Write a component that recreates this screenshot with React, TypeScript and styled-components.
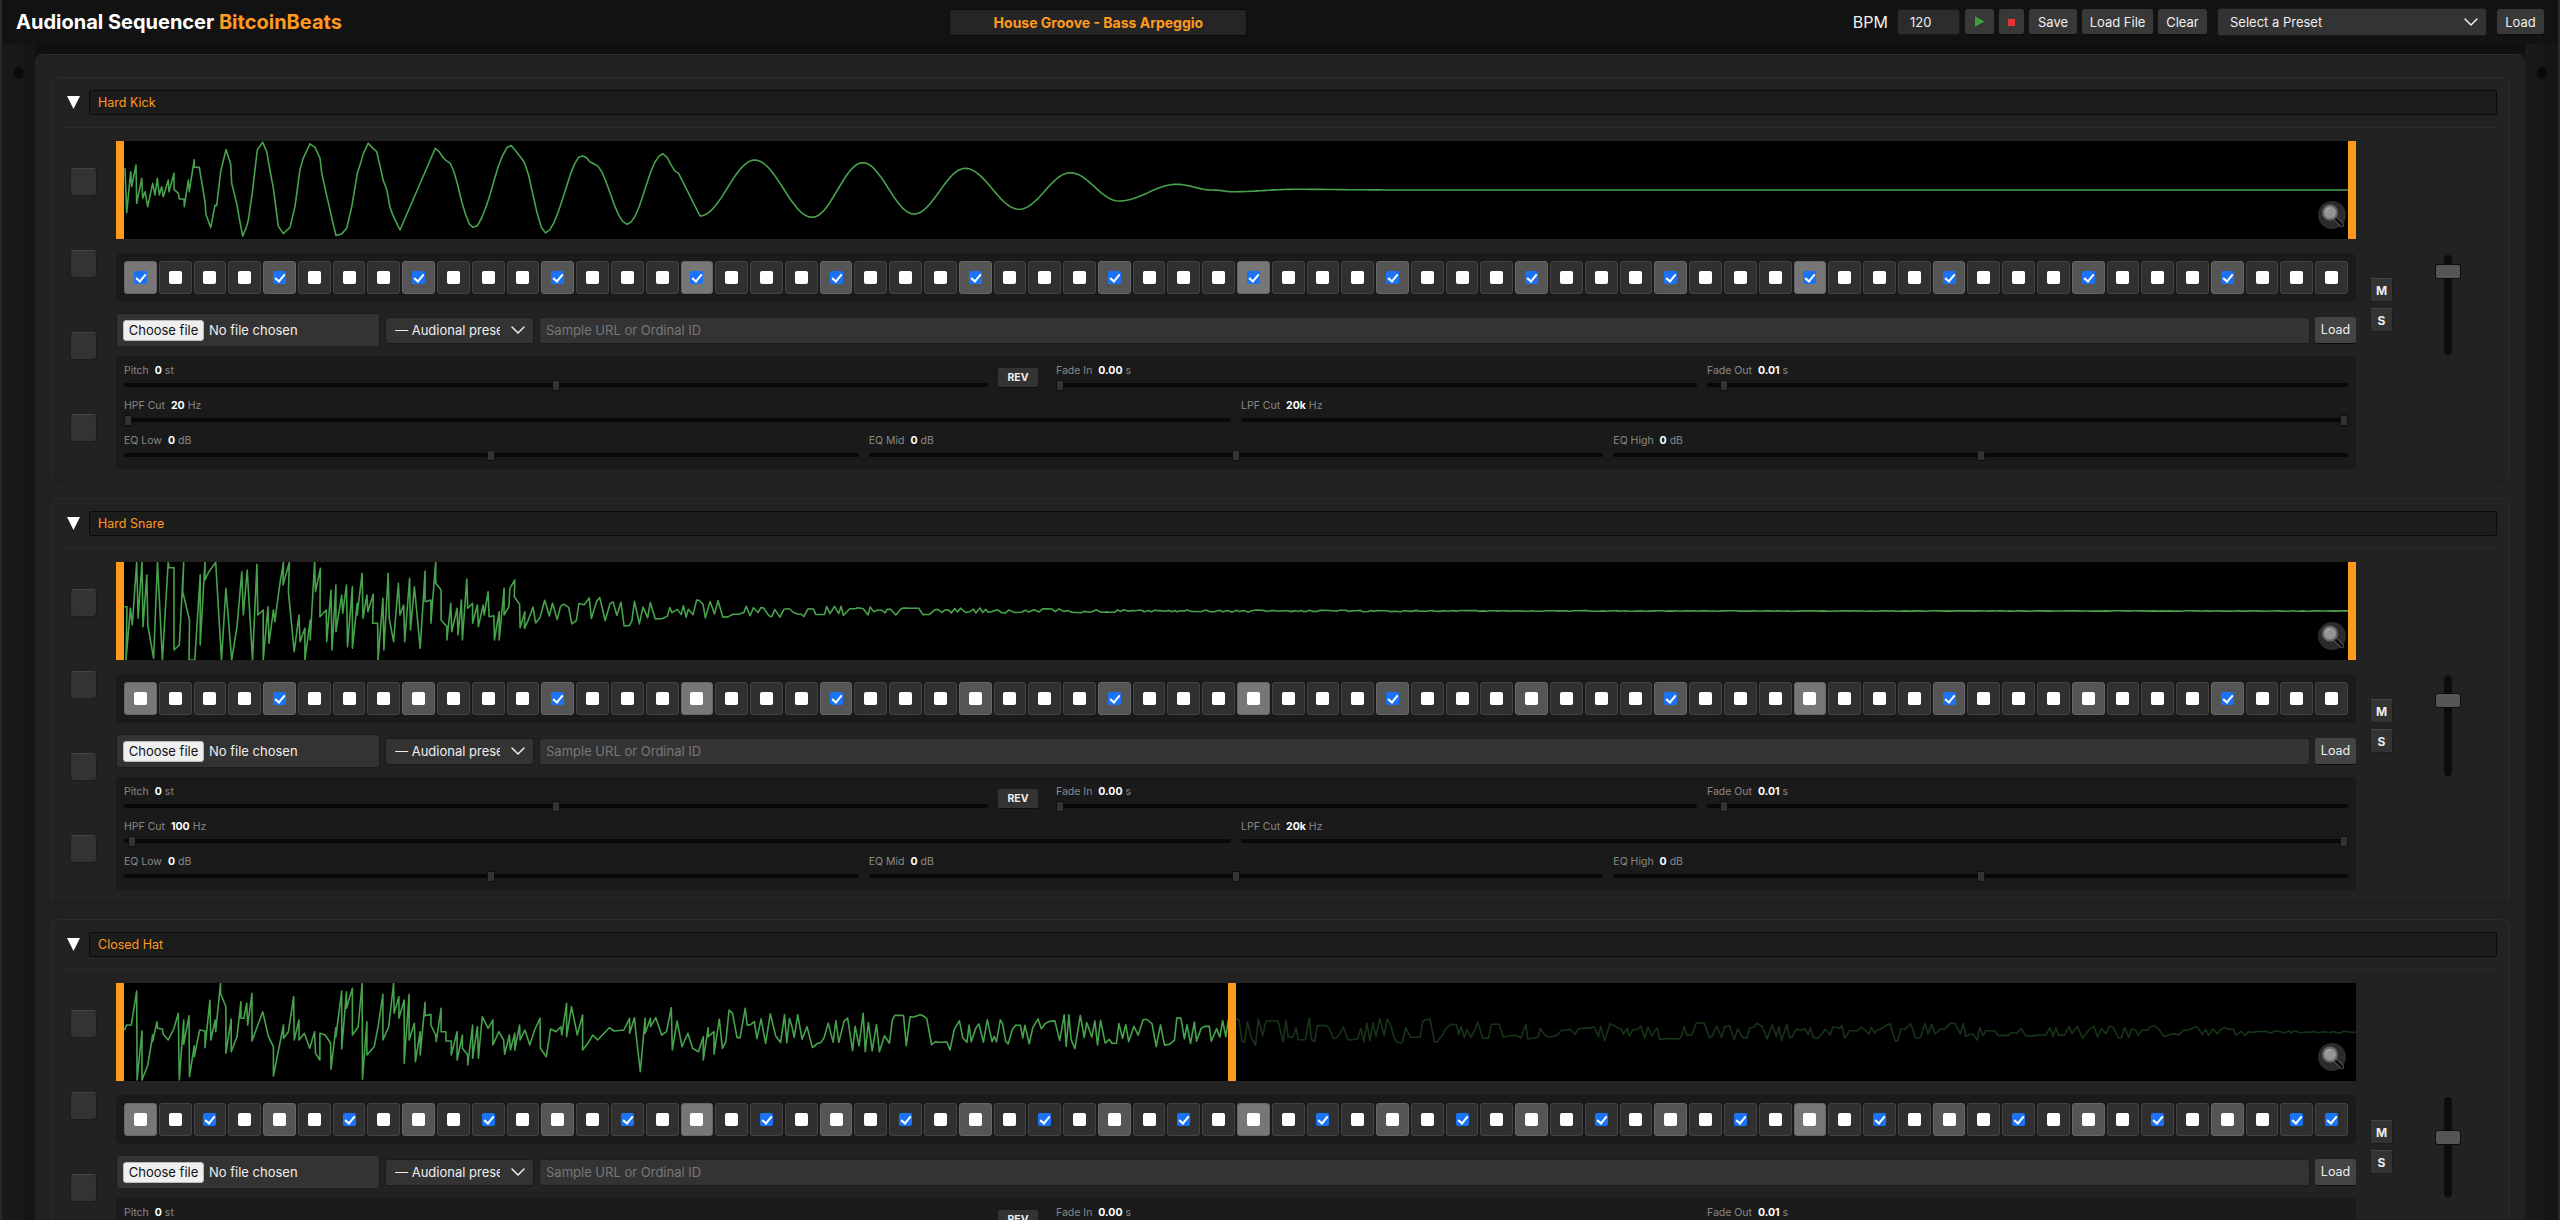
import styled, { createGlobalStyle } from "styled-components";
import { ChevronDown } from "lucide-react";

type Pt = [number, number];

const GlobalStyle = createGlobalStyle`
	html, body {
		margin: 0;
		height: 100%;
		overflow: hidden;
		background: #111;
		font-family: Inter, "Liberation Sans", sans-serif;
		color: #eee;
	}
	* {
		box-sizing: border-box;
	}
`;

/* waveform data, in px inside the 2240x98 display */
const CENTER = 49;
const WIDTH = 2240;

const noise = (seed: number) => {
	let s = seed;
	return () => {
		s = (s * 16807) % 2147483647;
		return s / 2147483647;
	};
};

const toPath = (pts: Pt[]) =>
	pts.map(([x, y], i) => `${i ? "L" : "M"}${x.toFixed(1)} ${y.toFixed(1)}`).join("");

// cosine easing between extremes, for the low sine of the kick
const smooth = (pts: Pt[], step: number, jitter = 0) => {
	const rnd = noise(1234);
	const out: Pt[] = [];
	for (let i = 0; i < pts.length - 1; i++) {
		const [x0, y0] = pts[i];
		const [x1, y1] = pts[i + 1];
		const n = Math.max(1, Math.round((x1 - x0) / step));
		for (let k = 0; k < n; k++) {
			const t = k / n;
			const y = y0 + ((y1 - y0) * (1 - Math.cos(Math.PI * t))) / 2;
			out.push([x0 + (x1 - x0) * t, y + (rnd() - 0.5) * jitter]);
		}
	}
	out.push(pts[pts.length - 1]);
	return out;
};

// the noisy part of a decay: spikes, small plateaus and louder and quieter bursts
const tail = (from: number, seed: number, amp: (x: number) => number) => {
	const rnd = noise(seed);
	const out: Pt[] = [];
	let up = false;
	let gain = 1;
	let last = 0;
	let count = 0;
	let held = 0;
	for (let x = from; x < WIDTH; x += 2 + rnd() * 3.5) {
		if (count++ % 9 === 0) gain = 0.6 + rnd() * 0.6;
		if (rnd() < 0.75) up = !up;
		if (rnd() > 0.14 || held > 1) {
			last = (up ? 1 : -1) * (0.2 + rnd() * 0.8);
			held = 0;
		} else {
			held++;
		}
		out.push([x, CENTER + amp(x) * gain * last]);
	}
	out.push([WIDTH, CENTER]);
	return out;
};

const kickHead: Pt[] = ([
	[75, 115], [80, 248], [92, 125], [95, 170], [108, 105], [110, 220], [125, 145], [128, 205], [135, 185],
	[143, 230], [158, 160], [165, 195], [172, 145], [178, 195], [185, 170], [190, 200], [205, 150], [207, 185],
	[222, 130], [222, 178], [235, 190], [238, 207], [252, 207], [253, 230], [265, 150], [268, 185], [283, 90],
	[283, 112], [298, 110], [315, 215], [318, 255], [332, 295], [345, 225], [350, 228], [362, 125], [378, 60],
	[392, 100], [395, 160], [410, 220], [428, 318], [440, 290], [445, 270], [457, 190], [472, 60], [488, 38],
	[500, 65], [520, 175], [535, 290], [550, 312], [570, 290], [585, 230], [600, 120], [610, 85], [630, 40],
	[645, 52], [660, 85], [665, 130], [690, 240], [708, 315], [725, 310], [740, 295], [755, 230], [772, 130],
	[790, 70], [805, 40], [830, 65], [850, 150], [880, 260], [900, 300],
] as Pt[]).map(([x, y]) => [x / 3 - 16, y / 3 - 11] as Pt);

const kickMid: Pt[] = ([
	[975, 447], [1000, 480], [1060, 683], [1145, 437], [1165, 470], [1222, 697], [1305, 467], [1330, 490],
	[1405, 672], [1485, 462], [1520, 520],
] as Pt[]).map(([x, y]) => [x / 2.24 - 116, y / 3 - 141] as Pt);

const kickEnd: Pt[] = ([
	[0, 648], [78, 480], [160, 652], [232, 488], [305, 642], [378, 505], [455, 628], [528, 518], [597, 603],
	[680, 553], [730, 570], [760, 575], [850, 568], [1000, 570],
] as Pt[]).map(([x, y]) => [584 + x / 1.4255, y / 3 - 141] as Pt);

const kickPath = toPath([
	...kickHead.slice(0, 26),
	...smooth(kickHead.slice(25), 4, 1.6),
	...smooth(kickMid, 4, 1.4),
	...smooth(kickEnd, 3),
	[WIDTH, CENTER],
]);

const snareHead: Pt[] = ([
	[30, 155], [35, 155], [33, 315], [42, 160], [46, 210], [55, 20], [58, 190], [66, 20], [68, 215], [76, 60], [78, 210],
	[90, 310], [98, 22], [108, 315], [120, 22], [122, 38], [132, 38], [132, 285], [143, 270], [152, 22], [150, 110],
	[164, 195], [163, 315], [175, 315], [186, 60], [186, 270], [196, 20], [196, 75], [204, 50], [218, 22], [230, 315],
	[239, 100], [251, 315], [262, 215], [272, 50], [275, 180], [283, 45], [294, 315], [303, 28], [305, 180], [316, 165],
	[316, 315], [326, 155], [328, 265], [337, 165], [340, 200], [350, 90], [358, 22], [357, 90], [370, 22], [368, 110],
	[380, 290], [390, 180], [392, 260], [402, 220], [402, 315], [413, 195], [413, 255], [422, 22], [424, 110], [434, 40],
	[433, 185], [446, 165], [447, 260], [456, 105], [458, 285], [466, 90], [466, 230], [478, 120], [480, 175], [488, 90],
	[490, 275], [500, 95], [500, 280], [510, 145], [510, 180], [520, 55], [522, 190], [530, 120], [532, 170], [543, 118],
	[542, 205], [552, 205], [553, 315], [563, 130], [565, 285], [574, 55], [576, 190], [585, 260], [595, 85], [598, 180],
	[606, 150], [608, 260], [618, 70], [620, 225], [628, 95], [640, 280], [650, 48], [650, 140], [662, 135], [662, 205],
	[672, 20], [672, 85], [683, 105], [683, 195], [695, 215], [695, 255], [703, 145], [705, 230], [716, 160], [718, 240],
	[725, 135], [727, 255], [736, 72], [738, 160], [748, 145], [748, 205], [758, 150], [760, 215], [770, 150], [772, 180],
	[780, 110], [782, 185], [792, 182], [793, 255], [803, 170], [803, 255], [813, 100], [813, 180], [823, 155], [825, 100],
	[835, 75], [834, 125], [845, 148], [846, 218], [856, 170], [855, 220],
] as Pt[]).map(([x, y]) => [x / 2.063 - 6, y / 3 - 7] as Pt);

const snarePath = toPath([
	...snareHead,
	...tail(412, 4711, (x) => 20 * Math.exp(-(x - 412) / 230) + 0.2),
]);

const hatHead: Pt[] = ([
	[30, 165], [34, 150], [44, 150], [55, 48], [56, 315], [66, 168], [66, 315], [78, 270], [88, 180], [88, 200], [97, 140],
	[98, 160], [108, 162], [110, 178], [120, 195], [132, 160], [141, 115], [143, 315], [152, 135], [152, 208], [163, 122],
	[164, 305], [174, 212], [174, 245], [185, 165], [196, 168], [196, 218], [206, 76], [208, 195], [217, 135], [218, 170],
	[228, 25], [228, 55], [239, 95], [239, 235], [250, 132], [250, 230], [262, 185], [270, 80], [270, 130], [276, 130],
	[282, 85], [284, 150], [293, 55], [293, 198], [315, 110], [327, 185], [337, 215], [337, 303], [358, 150], [358, 190],
	[368, 170], [379, 65], [380, 195], [390, 135], [390, 195], [401, 175], [412, 220], [422, 170], [424, 235], [433, 255],
	[433, 175], [444, 180], [455, 205], [456, 283], [466, 158], [466, 185], [478, 48], [478, 222], [488, 50], [488, 100],
	[500, 40], [500, 180], [512, 155], [520, 25], [521, 313], [530, 140], [530, 240], [545, 215], [553, 155], [563, 58],
	[563, 195], [575, 155], [585, 25], [586, 115], [596, 65], [596, 130], [607, 75], [607, 265], [617, 58], [617, 195],
	[628, 145], [630, 260], [640, 170], [640, 240], [650, 82], [650, 122], [662, 118], [662, 150], [672, 180], [673, 200],
	[683, 100], [683, 170], [693, 170], [693, 198], [704, 198], [704, 240], [716, 170], [716, 255], [727, 180], [727, 220],
	[738, 240], [738, 270], [748, 150], [748, 250], [758, 155], [760, 250], [768, 125], [780, 160], [790, 135], [790, 210],
	[802, 170], [812, 195], [814, 238], [824, 180], [826, 225], [835, 175], [835, 225], [845, 150], [846, 195], [856, 165],
	[866, 210], [876, 165], [887, 130], [888, 220], [900, 245], [909, 162], [920, 170], [930, 155], [932, 180], [942, 85],
	[942, 185], [952, 95], [964, 180], [975, 120], [975, 225], [986, 205], [996, 180], [1006, 195], [1030, 158], [1040, 168],
	[1060, 165], [1072, 130], [1072, 175], [1082, 128], [1084, 160], [1094, 290], [1104, 130], [1104, 175], [1115, 130],
	[1115, 155], [1126, 128], [1138, 180], [1148, 170], [1158, 98], [1160, 225], [1170, 138], [1180, 215], [1192, 175],
	[1202, 220], [1214, 230], [1224, 185], [1224, 255], [1234, 158], [1234, 185], [1246, 170],
] as Pt[]).map(([x, y]) => [x / 2.063 - 6, y / 3 - 8] as Pt);

const hatPath = toPath([
	...hatHead,
	...tail(598, 90210, (x) => (x > 2130 ? 1.2 : 24 * Math.exp(-(x - 598) / 950) + 1)),
]);

const STEPS = Array.from({ length: 64 }, (_, i) => i);

const TRACKS = [
	{ name: "Hard Kick", path: kickPath, hpf: 20, fader: 90, trimEnd: WIDTH, on: (i: number) => i % 4 === 0 },
	{ name: "Hard Snare", path: snarePath, hpf: 100, fader: 80, trimEnd: WIDTH, on: (i: number) => i % 8 === 4 },
	{ name: "Closed Hat", path: hatPath, hpf: 20, fader: 61, trimEnd: 1120, on: (i: number) => i % 4 === 2 || i === 63 },
];

const Page = styled.div`
	width: 2560px;
	min-height: 100vh;
	border-left: 2px solid #2a2a2a;
	border-right: 2px solid #2a2a2a;
	background: #111;
`;

const TopBar = styled.header`
	height: 44px;
	display: flex;
	align-items: center;
	justify-content: space-between;
	padding: 0 14px 0 14px;
	background: #121212;
`;

const Title = styled.h1`
	margin: 0;
	font-size: 20px;
	font-weight: 700;
	color: #fff;
	white-space: nowrap;
	span {
		color: #ff9a1f;
	}
`;

const SongName = styled.div`
	width: 298px;
	height: 27px;
	margin-left: 2px;
	display: flex;
	align-items: center;
	justify-content: center;
	background: #252525;
	border: 1px solid #0a0a0a;
	border-radius: 3px;
	color: #ff9a1f;
	font-size: 14px;
	font-weight: 700;
`;

const Transport = styled.div`
	display: flex;
	align-items: center;
	gap: 5px;
`;

const BpmLabel = styled.label`
	font-size: 16px;
	margin-right: 4px;
	color: #eee;
`;

const BpmInput = styled.input`
	width: 63px;
	height: 26px;
	padding: 0 12px;
	background: #2c2c2c;
	border: 1px solid #1c1c1c;
	border-radius: 3px;
	color: #eee;
	font: 13px Inter, sans-serif;
`;

const Button = styled.button<{ $w?: number }>`
	width: ${(p) => (p.$w ? `${p.$w}px` : "auto")};
	height: 26px;
	padding: 0;
	display: flex;
	align-items: center;
	justify-content: center;
	background: #383838;
	border: none;
	border-bottom: 1px solid #0c0c0c;
	border-radius: 3px;
	color: #eee;
	font: 13px Inter, sans-serif;
`;

const PlayIcon = styled.i`
	width: 10px;
	height: 11px;
	background: #3da13d;
	clip-path: polygon(0 0, 100% 50%, 0 100%);
`;

const StopIcon = styled.i`
	width: 7px;
	height: 7px;
	margin-top: 2px;
	background: #e63333;
`;

const SelectWrap = styled.div<{ $w: number; $h: number; $gap?: number }>`
	position: relative;
	flex: none;
	width: ${(p) => p.$w}px;
	height: ${(p) => p.$h}px;
	margin: 0 ${(p) => p.$gap ?? 0}px;
	svg {
		position: absolute;
		top: 50%;
		right: 4px;
		transform: translateY(-50%);
		pointer-events: none;
	}
`;

const Select = styled.select<{ $pad: number; $padR: number }>`
	width: 100%;
	height: 100%;
	padding: 0 ${(p) => p.$padR}px 0 ${(p) => p.$pad}px;
	appearance: none;
	background: #333;
	border: 1px solid #1a1a1a;
	border-radius: 3px;
	color: #eee;
	font: 13px Inter, sans-serif;
`;

const Body = styled.div`
	display: flex;
`;

const Rail = styled.div`
	flex: 0 0 33px;
	display: flex;
	justify-content: center;
	padding-top: 23px;
	background: linear-gradient(90deg, #1a1a1a, #141414);
`;

const Screw = styled.span`
	width: 10px;
	height: 12px;
	border-radius: 50%;
	background: #0a0a0a;
`;

const RackWrap = styled.div`
	flex: 0 0 2490px;
	padding-top: 10px;
	background: #101010;
`;

const Rack = styled.main`
	display: flex;
	flex-direction: column;
	gap: 16px;
	padding: 22px 15px 23px 16px;
	background: #212121;
	border-top: 1px solid #2d2d2d;
	border-radius: 8px 8px 0 0;
`;

const Card = styled.section`
	height: 405px;
	padding: 12px 11px;
	background: #222;
	border: 1px solid #2c2c2c;
	border-bottom-color: #1a1a1a;
	border-radius: 8px;
`;

const CardHeader = styled.div`
	display: flex;
	align-items: center;
	margin-right: 1px;
	padding-bottom: 12px;
	border-bottom: 1px solid #2c2c2c;
	margin-bottom: 13px;
`;

const Collapse = styled.button`
	flex: 0 0 26px;
	height: 25px;
	padding: 0 0 0 4px;
	background: none;
	border: none;
	&::before {
		content: "";
		display: block;
		width: 13px;
		height: 13px;
		background: #fff;
		clip-path: polygon(0 0, 100% 0, 50% 100%);
	}
`;

const NameInput = styled.input`
	flex: 1;
	height: 25px;
	padding: 0 8px;
	background: #1c1c1c;
	border: 1px solid #0a0a0a;
	border-radius: 2px;
	color: #ff9a1f;
	font: 12.5px Inter, sans-serif;
`;

const CardBody = styled.div`
	display: flex;
`;

const PadColumn = styled.div`
	flex: 0 0 40px;
	margin-right: 13px;
	display: flex;
	flex-direction: column;
	align-items: center;
	justify-content: space-around;
`;

const Pad = styled.button`
	width: 27px;
	height: 28px;
	padding: 0;
	background: #333;
	border: 1px solid #1c1c1c;
	border-top-color: #444;
	border-radius: 4px;
`;

const Main = styled.div`
	flex: 0 0 2240px;
`;

const Wave = styled.div`
	position: relative;
	height: 98px;
	background: #000;
	overflow: hidden;
	svg.wave {
		display: block;
	}
`;

const Handle = styled.span`
	position: absolute;
	top: 0;
	bottom: 0;
	width: 8px;
	background: #ff9a1f;
`;

const Dim = styled.span`
	position: absolute;
	top: 0;
	bottom: 0;
	right: 0;
	background: rgba(0, 0, 0, 0.68);
`;

const ZoomButton = styled.button`
	position: absolute;
	right: 10px;
	bottom: 10px;
	width: 28px;
	height: 28px;
	padding: 0;
	background: none;
	border: none;
`;

const StepStrip = styled.div`
	margin-top: 14px;
	height: 49px;
	padding: 8px;
	display: grid;
	grid-template-columns: repeat(64, 1fr);
	gap: 2px;
	background: #1a1a1a;
	border-radius: 6px;
`;

const Step = styled.label<{ $tone: string }>`
	display: flex;
	align-items: center;
	justify-content: center;
	background: ${(p) => p.$tone};
	border: 1px solid ${(p) => (p.$tone === "#303030" ? "#444" : "#666")};
	border-radius: 3px;
`;

const StepCheck = styled.input`
	appearance: none;
	position: relative;
	width: 13px;
	height: 13px;
	margin: 0;
	background: #fff;
	border-radius: 2px;
	&:checked {
		background: #1a73f5;
	}
	&:checked::after {
		content: "";
		position: absolute;
		left: 4px;
		top: 1px;
		width: 4px;
		height: 8px;
		border: solid #fff;
		border-width: 0 2px 2px 0;
		transform: rotate(40deg);
	}
`;

const SourceRow = styled.div`
	margin-top: 11px;
	height: 34px;
	display: flex;
	align-items: center;
	gap: 5px;
`;

const FilePicker = styled.label`
	flex: 0 0 264px;
	height: 34px;
	padding: 0 6px;
	display: flex;
	align-items: center;
	gap: 5px;
	background: #333;
	border: 1px solid #1c1c1c;
	border-radius: 3px;
	color: #eee;
	font-size: 13px;
	input {
		display: none;
	}
`;

const FileButton = styled.span`
	width: 81px;
	height: 21px;
	display: flex;
	align-items: center;
	justify-content: center;
	background: #efefef;
	border: 1px solid #bbb;
	border-radius: 3px;
	color: #111;
`;

const UrlInput = styled.input`
	flex: 1;
	height: 27px;
	padding: 0 6px;
	background: #333;
	border: 1px solid #1c1c1c;
	border-radius: 3px;
	color: #eee;
	font: 13px Inter, sans-serif;
	&::placeholder {
		color: #777;
	}
`;

const SmallLoad = styled(Button)`
	flex: 0 0 41px;
	height: 27px;
	background: #444;
	font-size: 12.5px;
`;

const FxPanel = styled.div`
	margin-top: 9px;
	height: 113px;
	padding: 8px 8px 8px;
	display: flex;
	flex-direction: column;
	gap: 8px;
	background: #1a1a1a;
	border-radius: 4px;
`;

const FxRow = styled.div<{ $cols: string }>`
	display: grid;
	grid-template-columns: ${(p) => p.$cols};
	column-gap: 10px;
	align-items: center;
`;

const Control = styled.div`
	min-width: 0;
`;

const ControlLabel = styled.label`
	display: block;
	height: 14px;
	margin-bottom: 1px;
	font-size: 10.5px;
	line-height: 14px;
	color: #888;
	b {
		margin-left: 3px;
		margin-right: 3px;
		color: #fff;
		font-weight: 700;
	}
`;

const Range = styled.input`
	display: block;
	width: 100%;
	height: 12px;
	margin: 0;
	appearance: none;
	background: transparent;
	&::-webkit-slider-runnable-track {
		height: 4px;
		background: #080808;
		border-radius: 2px;
	}
	&::-webkit-slider-thumb {
		appearance: none;
		width: 8px;
		height: 11px;
		margin-top: -3.5px;
		background: #333;
		border: 1px solid #0e0e0e;
		border-radius: 1px;
	}
`;

const RevButton = styled.button`
	width: 40px;
	height: 20px;
	padding: 0;
	background: #333;
	border: none;
	border-bottom: 1px solid #0e0e0e;
	border-radius: 2px;
	color: #eee;
	font: 700 10.5px Inter, sans-serif;
`;

const Side = styled.div`
	flex: 1;
	display: flex;
	align-items: center;
	padding-left: 14px;
`;

const MuteSolo = styled.div`
	display: flex;
	flex-direction: column;
	gap: 6px;
`;

const ToggleButton = styled.button`
	width: 23px;
	height: 24px;
	padding: 0;
	background: #333;
	border: 1px solid #1c1c1c;
	border-top-color: #444;
	border-radius: 2px;
	color: #eee;
	font: 700 12px Inter, sans-serif;
`;

const Fader = styled.input`
	width: 26px;
	height: 100px;
	margin: 0 0 0 42px;
	appearance: none;
	background: transparent;
	writing-mode: vertical-lr;
	direction: rtl;
	&::-webkit-slider-runnable-track {
		width: 8px;
		height: 100%;
		margin: 0 auto;
		background: #0c0c0c;
		border-radius: 4px;
	}
	&::-webkit-slider-thumb {
		appearance: none;
		width: 26px;
		height: 15px;
		margin-left: -9px;
		background: #555;
		border: 1px solid #0c0c0c;
		border-radius: 3px;
	}
`;

function Magnifier() {
	return (
		<svg width="28" height="28" viewBox="0 0 28 28">
			<circle cx="14" cy="14" r="14" fill="#2b2b2b" />
			<path d="M17.5 17.5 L24 24" stroke="#6a6a6a" strokeWidth="4.4" strokeLinecap="round" />
			<path d="M18 18 L24 24" stroke="#0c0c0c" strokeWidth="3" strokeLinecap="round" />
			<circle cx="12" cy="11.5" r="7" fill="#949494" stroke="#666" strokeWidth="2" />
			<path d="M7.5 11 A4.8 4.8 0 0 1 12 6.8" fill="none" stroke="#b5b5b5" strokeWidth="1" />
		</svg>
	);
}

function Param(props: { label: string; text: string; unit: string; min: number; max: number; value: number }) {
	return (
		<Control>
			<ControlLabel>
				{props.label} <b>{props.text}</b>
				{props.unit}
			</ControlLabel>
			<Range type="range" min={props.min} max={props.max} step="any" defaultValue={props.value} />
		</Control>
	);
}

function Track({ name, path, hpf, fader, trimEnd, on }: (typeof TRACKS)[number]) {
	return (
		<Card>
			<CardHeader>
				<Collapse aria-label="Collapse" />
				<NameInput defaultValue={name} />
			</CardHeader>
			<CardBody>
				<PadColumn>
					<Pad />
					<Pad />
					<Pad />
					<Pad />
				</PadColumn>
				<Main>
					<Wave>
						<svg className="wave" width={WIDTH} height="98" viewBox={`0 0 ${WIDTH} 98`}>
							<path d={path} fill="none" stroke="#47a34b" strokeWidth="1.6" strokeLinejoin="round" />
						</svg>
						{trimEnd < WIDTH && <Dim style={{ left: trimEnd }} />}
						<Handle style={{ left: 0 }} />
						<Handle style={{ left: trimEnd - 8 }} />
						<ZoomButton aria-label="Zoom">
							<Magnifier />
						</ZoomButton>
					</Wave>
					<StepStrip>
						{STEPS.map((i) => (
							<Step key={i} $tone={i % 16 === 0 ? "#777" : i % 4 === 0 ? "#555" : "#303030"}>
								<StepCheck type="checkbox" defaultChecked={on(i)} />
							</Step>
						))}
					</StepStrip>
					<SourceRow>
						<FilePicker>
							<FileButton>Choose file</FileButton>
							No file chosen
							<input type="file" />
						</FilePicker>
						<SelectWrap $w={149} $h={27}>
							<Select $pad={9} $padR={33} defaultValue="">
								<option value="">— Audional presets —</option>
							</Select>
							<ChevronDown size={24} strokeWidth={1.5} color="#eee" />
						</SelectWrap>
						<UrlInput placeholder="Sample URL or Ordinal ID" />
						<SmallLoad>Load</SmallLoad>
					</SourceRow>
					<FxPanel>
						<FxRow $cols="864px 48px 641px 641px">
							<Param label="Pitch" text="0" unit="st" min={-24} max={24} value={0} />
							<RevButton>REV</RevButton>
							<Param label="Fade In" text="0.00" unit="s" min={0} max={0.5} value={0} />
							<Param label="Fade Out" text="0.01" unit="s" min={0} max={0.5} value={0.01} />
						</FxRow>
						<FxRow $cols="1fr 1fr">
							<Param label="HPF Cut" text={String(hpf)} unit="Hz" min={20} max={20000} value={hpf} />
							<Param label="LPF Cut" text="20k" unit="Hz" min={20} max={20000} value={20000} />
						</FxRow>
						<FxRow $cols="1fr 1fr 1fr">
							<Param label="EQ Low" text="0" unit="dB" min={-12} max={12} value={0} />
							<Param label="EQ Mid" text="0" unit="dB" min={-12} max={12} value={0} />
							<Param label="EQ High" text="0" unit="dB" min={-12} max={12} value={0} />
						</FxRow>
					</FxPanel>
				</Main>
				<Side>
					<MuteSolo>
						<ToggleButton>M</ToggleButton>
						<ToggleButton>S</ToggleButton>
					</MuteSolo>
					<Fader type="range" min={0} max={100} defaultValue={fader} />
				</Side>
			</CardBody>
		</Card>
	);
}

export default function App() {
	return (
		<Page>
			<GlobalStyle />
			<TopBar>
				<Title>
					Audional Sequencer <span>BitcoinBeats</span>
				</Title>
				<SongName>House Groove - Bass Arpeggio</SongName>
				<Transport>
					<BpmLabel>BPM</BpmLabel>
					<BpmInput defaultValue="120" />
					<Button $w={29}>
						<PlayIcon />
					</Button>
					<Button $w={25}>
						<StopIcon />
					</Button>
					<Button $w={48}>Save</Button>
					<Button $w={71}>Load File</Button>
					<Button $w={49}>Clear</Button>
					<SelectWrap $w={270} $h={28} $gap={5}>
						<Select $pad={12} $padR={30} defaultValue="">
							<option value="">Select a Preset</option>
						</Select>
						<ChevronDown size={24} strokeWidth={1.5} color="#eee" />
					</SelectWrap>
					<Button $w={47}>Load</Button>
				</Transport>
			</TopBar>
			<Body>
				<Rail>
					<Screw />
				</Rail>
				<RackWrap>
					<Rack>
						{TRACKS.map((t) => (
							<Track key={t.name} {...t} />
						))}
					</Rack>
				</RackWrap>
				<Rail>
					<Screw />
				</Rail>
			</Body>
		</Page>
	);
}
